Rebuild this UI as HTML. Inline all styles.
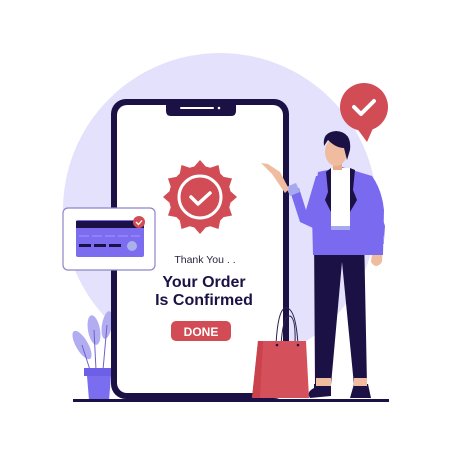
<!DOCTYPE html>
<html><head><style>
html,body{margin:0;padding:0;background:#fff;width:450px;height:450px;overflow:hidden}
svg{display:block}
text{font-family:"Liberation Sans",sans-serif}
</style></head><body>
<svg width="450" height="450" viewBox="0 0 450 450" xmlns="http://www.w3.org/2000/svg">
<circle cx="220" cy="210" r="157" fill="#e3e1fb"/>
<!-- plant -->
<g fill="#b2acf0">
<ellipse cx="82" cy="345" rx="6" ry="16" transform="rotate(-30 82 345)"/>
<ellipse cx="94" cy="330" rx="6" ry="15" transform="rotate(-10 94 330)"/>
<ellipse cx="107" cy="325" rx="5" ry="14" transform="rotate(10 107 325)"/>
</g>
<path d="M90 370L82 345M96 370L94 330M103 370L107 325" stroke="#6b62c9" stroke-width="1" fill="none"/>
<rect x="84" y="368" width="29" height="8" fill="#6d5fe6"/>
<path d="M87 376H111L109 400H89Z" fill="#7b6df0"/>
<!-- phone -->
<rect x="111" y="99" width="178" height="300" rx="15" fill="#1c1145"/>
<rect x="117" y="105" width="166" height="288" rx="10" fill="#fff"/>
<path d="M166 104H236V111Q236 116 231 116H171Q166 116 166 111Z" fill="#1c1145"/>
<rect x="180" y="107" width="34" height="2" rx="1" fill="#fff"/>
<circle cx="219" cy="108" r="1.3" fill="#fff"/>
<!-- badge -->
<g fill="#d24c55">
<circle cx="200" cy="197" r="31"/>
<g id="z"><polygon points="200,160 207,168 193,168"/></g>
<use href="#z" transform="rotate(30 200 197)"/><use href="#z" transform="rotate(60 200 197)"/><use href="#z" transform="rotate(90 200 197)"/><use href="#z" transform="rotate(120 200 197)"/><use href="#z" transform="rotate(150 200 197)"/><use href="#z" transform="rotate(180 200 197)"/><use href="#z" transform="rotate(210 200 197)"/><use href="#z" transform="rotate(240 200 197)"/><use href="#z" transform="rotate(270 200 197)"/><use href="#z" transform="rotate(300 200 197)"/><use href="#z" transform="rotate(330 200 197)"/>
</g>
<circle cx="200" cy="197" r="21" fill="none" stroke="#fff" stroke-width="3"/>
<path d="M191 197L198 204L210 193" fill="none" stroke="#fff" stroke-width="3.5" stroke-linecap="round" stroke-linejoin="round"/>
<text x="205" y="263" font-size="10.5" fill="#2a2340" text-anchor="middle">Thank You . .</text>
<text x="204" y="287" font-size="16" font-weight="bold" fill="#1c1145" text-anchor="middle">Your Order</text>
<text x="204" y="305" font-size="16" font-weight="bold" fill="#1c1145" text-anchor="middle">Is Confirmed</text>
<rect x="171" y="321" width="60" height="20" rx="5" fill="#d24c55"/>
<text x="201" y="336" font-size="12" font-weight="bold" fill="#fff" text-anchor="middle">DONE</text>
<!-- card panel -->
<rect x="63" y="208" width="92" height="62" rx="5" fill="#fff" stroke="#8b86c9" stroke-width="1.2"/>
<rect x="76" y="220" width="68" height="37" rx="2" fill="#7b6cf0"/>
<rect x="76" y="221" width="68" height="7" fill="#1c1145"/>
<path d="M79 236H140" stroke="#9a8ff5" stroke-width="1.2" stroke-dasharray="10 3"/>
<rect x="79" y="244" width="12" height="3" fill="#1c1145"/><rect x="94" y="244" width="12" height="3" fill="#1c1145"/><rect x="109" y="244" width="12" height="3" fill="#1c1145"/>
<circle cx="132" cy="246" r="5" fill="#a9b0ea"/>
<circle cx="139" cy="222" r="6" fill="#d24c55"/>
<path d="M136 222L138.5 224.5L142 220.5" stroke="#fff" stroke-width="1.3" fill="none"/>
<!-- floor -->
<rect x="73" y="399" width="316" height="3" fill="#1c1145"/>
<!-- bag -->
<path d="M276 345Q278 306 287 308Q296 310 298 345M281 345Q283 315 290 316Q296 318 295 345" fill="none" stroke="#2a2050" stroke-width="1"/>
<path d="M258 341H306L309 398H252Z" fill="#d4505a"/>
<path d="M258 341H263L260 398H252Z" fill="#c9424c"/>
<circle cx="277" cy="345" r="1.3" fill="#1c1145"/><circle cx="298" cy="345" r="1.3" fill="#1c1145"/>
<!-- speech bubble -->
<circle cx="364" cy="107" r="24" fill="#d24c55"/>
<path d="M356 127L367 142L374 126Z" fill="#d24c55"/>
<path d="M354 107L361 114L374 101" stroke="#fff" stroke-width="4" fill="none" stroke-linecap="round" stroke-linejoin="round"/>
<!-- person -->
<path d="M314 232H364L367 385H354L342 262L331 385H315Z" fill="#1c1145"/>
<path d="M314 384H331V396L310 398Q306 392 314 388Z" fill="#1c1145"/>
<path d="M354 384H368L371 398H350Z" fill="#1c1145"/>
<path d="M316 378H331V386H316ZM354 378H367V386H354Z" fill="#f0bca0"/>
<path d="M370 180L385 226L384 240L373 240L368 200Z" fill="#7a6af0"/>
<path d="M373 236H384V244H373Z" fill="#a6a9ee"/>
<path d="M373 244H383L382 262Q376 270 371 262Z" fill="#f0bca0"/>
<path d="M318 172L342 167L372 176Q382 190 384 210L383 255H313L312 215Z" fill="#7a6af0"/>
<rect x="331" y="168" width="19" height="60" fill="#fff"/>
<rect x="331" y="226" width="19" height="4" fill="#a6a9ee"/>
<path d="M326 172L331 168L331 212L325 200L328 192Z" fill="#1c1145"/>
<path d="M355 170L350 168L350 212L357 200L353 190Z" fill="#1c1145"/>
<path d="M320 176L313 228L300 222L291 194L299 188L306 210L316 176Z" fill="#7a6af0"/>
<path d="M286 187L296 183L300 192L290 196Z" fill="#a6a9ee"/>
<path d="M289 189L280 172L268 164L261 163L272 174L285 193Z" fill="#f0bca0"/>
<rect x="333" y="160" width="9" height="10" fill="#e8a988"/>
<ellipse cx="336" cy="152" rx="11" ry="14" fill="#f0bca0"/>
<path d="M324 146Q322 132 336 131Q352 132 350 150L347 160L344 148Q336 148 328 140Z" fill="#1c1145"/>
</svg>
</body></html>
